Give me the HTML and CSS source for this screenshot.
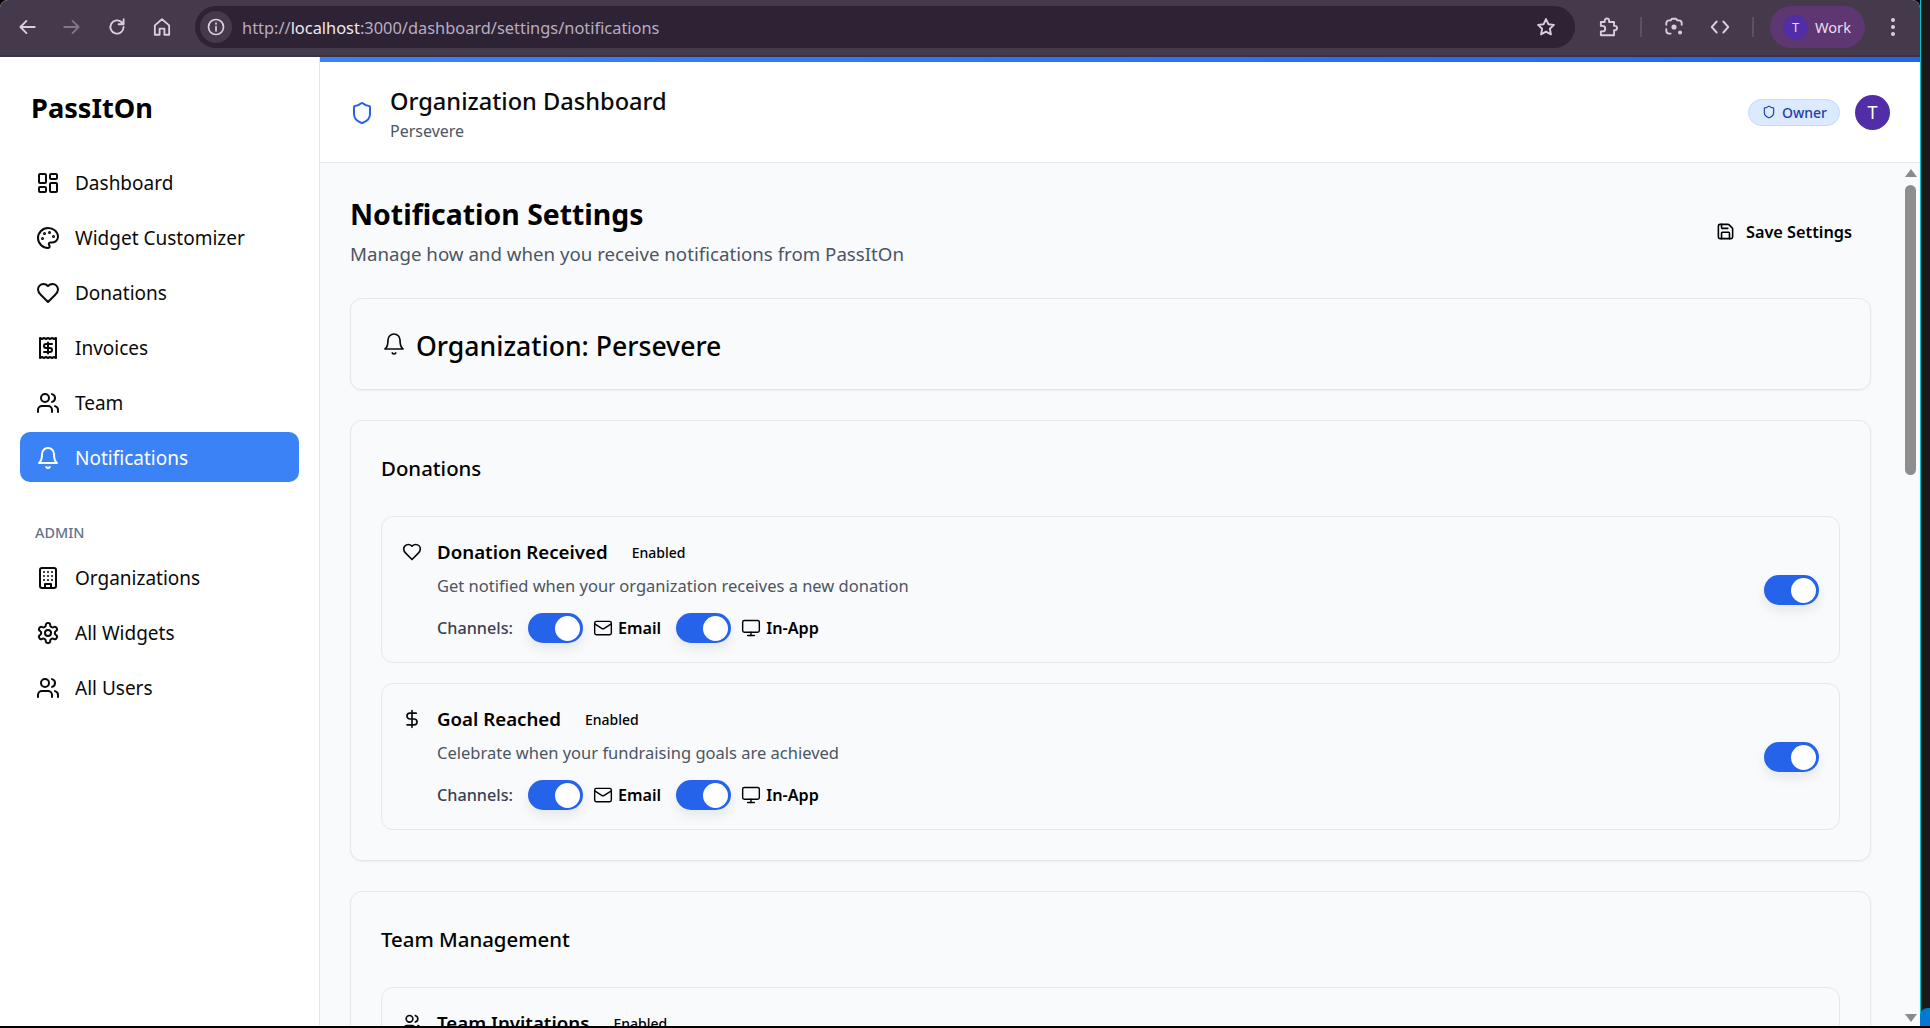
FILE: index.html
```html
<!DOCTYPE html>
<html lang="en">
<head>
  <meta charset="UTF-8">
  <title>PassItOn - Notification Settings</title>
  <link rel="stylesheet" href="styles.css">
</head>
<body>

  <!-- icon sprite -->
  <svg class="sprite" xmlns="http://www.w3.org/2000/svg">
    <symbol id="i-dashboard" viewBox="0 0 24 24"><rect x="3" y="3" width="7" height="9" rx="1"/><rect x="14" y="3" width="7" height="5" rx="1"/><rect x="14" y="12" width="7" height="9" rx="1"/><rect x="3" y="16" width="7" height="5" rx="1"/></symbol>
    <symbol id="i-palette" viewBox="0 0 24 24"><circle cx="13.5" cy="6.5" r=".5" fill="currentColor"/><circle cx="17.5" cy="10.5" r=".5" fill="currentColor"/><circle cx="8.5" cy="7.5" r=".5" fill="currentColor"/><circle cx="6.5" cy="12.5" r=".5" fill="currentColor"/><path d="M12 2C6.5 2 2 6.5 2 12s4.5 10 10 10c.926 0 1.648-.746 1.648-1.688 0-.437-.18-.835-.437-1.125-.29-.289-.438-.652-.438-1.125a1.64 1.64 0 0 1 1.668-1.668h1.996c3.051 0 5.555-2.503 5.555-5.554C21.965 6.012 17.461 2 12 2z"/></symbol>
    <symbol id="i-heart" viewBox="0 0 24 24"><path d="M19 14c1.49-1.46 3-3.21 3-5.5A5.5 5.5 0 0 0 16.5 3c-1.76 0-3 .5-4.5 2-1.5-1.5-2.74-2-4.5-2A5.5 5.5 0 0 0 2 8.5c0 2.3 1.5 4.05 3 5.5l7 7Z"/></symbol>
    <symbol id="i-receipt" viewBox="0 0 24 24"><path d="M4 2v20l2-1 2 1 2-1 2 1 2-1 2 1 2-1 2 1V2l-2 1-2-1-2 1-2-1-2 1-2-1-2 1Z"/><path d="M16 8h-6a2 2 0 1 0 0 4h4a2 2 0 1 1 0 4H8"/><path d="M12 17.5v-11"/></symbol>
    <symbol id="i-users" viewBox="0 0 24 24"><path d="M16 21v-2a4 4 0 0 0-4-4H6a4 4 0 0 0-4 4v2"/><circle cx="9" cy="7" r="4"/><path d="M22 21v-2a4 4 0 0 0-3-3.87"/><path d="M16 3.13a4 4 0 0 1 0 7.75"/></symbol>
    <symbol id="i-bell" viewBox="0 0 24 24"><path d="M6 8a6 6 0 0 1 12 0c0 7 3 9 3 9H3s3-2 3-9"/><path d="M10.3 21a1.94 1.94 0 0 0 3.4 0"/></symbol>
    <symbol id="i-building" viewBox="0 0 24 24"><rect x="4" y="2" width="16" height="20" rx="2"/><path d="M9 22v-4h6v4"/><path d="M8 6h.01M16 6h.01M12 6h.01M12 10h.01M12 14h.01M16 10h.01M16 14h.01M8 10h.01M8 14h.01"/></symbol>
    <symbol id="i-gear" viewBox="0 0 24 24"><path d="M12.22 2h-.44a2 2 0 0 0-2 2v.18a2 2 0 0 1-1 1.73l-.43.25a2 2 0 0 1-2 0l-.15-.08a2 2 0 0 0-2.73.73l-.22.38a2 2 0 0 0 .73 2.73l.15.1a2 2 0 0 1 1 1.72v.51a2 2 0 0 1-1 1.74l-.15.09a2 2 0 0 0-.73 2.73l.22.38a2 2 0 0 0 2.73.73l.15-.08a2 2 0 0 1 2 0l.43.25a2 2 0 0 1 1 1.73V20a2 2 0 0 0 2 2h.44a2 2 0 0 0 2-2v-.18a2 2 0 0 1 1-1.73l.43-.25a2 2 0 0 1 2 0l.15.08a2 2 0 0 0 2.73-.73l.22-.39a2 2 0 0 0-.73-2.73l-.15-.08a2 2 0 0 1-1-1.74v-.5a2 2 0 0 1 1-1.74l.15-.09a2 2 0 0 0 .73-2.73l-.22-.38a2 2 0 0 0-2.73-.73l-.15.08a2 2 0 0 1-2 0l-.43-.25a2 2 0 0 1-1-1.73V4a2 2 0 0 0-2-2z"/><circle cx="12" cy="12" r="3"/></symbol>
    <symbol id="i-shield" viewBox="0 0 24 24"><path d="M20 13c0 5-3.5 7.5-7.66 8.95a1 1 0 0 1-.67-.01C7.5 20.5 4 18 4 13V6a1 1 0 0 1 1-1c2 0 4.5-1.2 6.24-2.72a1.17 1.17 0 0 1 1.52 0C14.51 3.81 17 5 19 5a1 1 0 0 1 1 1z"/></symbol>
    <symbol id="i-save" viewBox="0 0 24 24"><path d="M15.2 3a2 2 0 0 1 1.4.6l3.8 3.8a2 2 0 0 1 .6 1.4V19a2 2 0 0 1-2 2H5a2 2 0 0 1-2-2V5a2 2 0 0 1 2-2z"/><path d="M17 21v-7a1 1 0 0 0-1-1H8a1 1 0 0 0-1 1v7"/><path d="M7 3v4a1 1 0 0 0 1 1h7"/></symbol>
    <symbol id="i-dollar" viewBox="0 0 24 24"><path d="M12 2v20"/><path d="M17 5H9.5a3.5 3.5 0 0 0 0 7h5a3.5 3.5 0 0 1 0 7H6"/></symbol>
    <symbol id="i-mail" viewBox="0 0 24 24"><rect x="2" y="4" width="20" height="16" rx="2"/><path d="m22 7-8.97 5.7a1.94 1.94 0 0 1-2.06 0L2 7"/></symbol>
    <symbol id="i-monitor" viewBox="0 0 24 24"><rect x="2" y="3" width="20" height="14" rx="2"/><path d="M8 21h8"/><path d="M12 17v4"/></symbol>
  </svg>

  <div class="window">

    <!-- browser toolbar -->
    <div class="toolbar">
      <div class="nav-btns">
        <svg class="tb-icon" viewBox="0 0 20 20"><path d="M17 10H4M9.5 4.5 4 10l5.5 5.5"/></svg>
        <svg class="tb-icon dim" viewBox="0 0 20 20"><path d="M3 10h13M10.500 4.500 16 10l-5.500 5.500"/></svg>
        <svg class="tb-icon" viewBox="0 0 20 20"><path d="M16 10a6 6 0 1 1-1.800-4.300L16 7.500M16 3v4.500h-4.500"/></svg>
        <svg class="tb-icon" viewBox="0 0 20 20"><path d="M3.500 17V8.500L10 3l6.500 5.500V17h-4.300v-5.500H7.800V17z"/></svg>
      </div>
      <div class="urlbar">
        <span class="url-info">
          <svg class="tb-icon" viewBox="0 0 20 20"><circle cx="10" cy="10" r="7.500"/><path d="M10 9.500v4.500M10 6.200v.8"/></svg>
        </span>
        <span class="url-text">http://<b>localhost</b>:3000/dashboard/settings/notifications</span>
        <svg class="tb-icon star" viewBox="0 0 20 20"><path d="m10 2.800 2.200 4.700 5 .6-3.700 3.500 1 5.100L10 14.200l-4.500 2.500 1-5.100-3.700-3.500 5-.6z"/></svg>
      </div>
      <div class="tb-right">
        <svg class="tb-icon" viewBox="0 0 20 20"><path d="M3.500 5.500H7V4.300a2 2 0 0 1 4 0v1.200h4.500V9h.7a2 2 0 0 1 0 4h-.7v4.500H3.500V14H5a2.500 2.500 0 0 0 0-5H3.500z"/></svg>
        <span class="tb-sep"></span>
        <svg class="tb-icon" viewBox="0 0 20 20"><path d="M7 4h-1.500a2.500 2.500 0 0 0-2.500 2.500V8M13 4h1.500A2.500 2.500 0 0 1 17 6.500V8M3 12v1.500A2.500 2.500 0 0 0 5.500 16H7M7 4l1-1.500h4L13 4"/><circle cx="10" cy="10" r="1.500" fill="currentColor"/><circle cx="15.500" cy="15" r="1" fill="currentColor"/></svg>
        <svg class="tb-icon" viewBox="0 0 20 20"><path d="M7 5 2.500 10 7 15M13 5l4.500 5-4.500 5"/></svg>
        <span class="tb-sep"></span>
        <div class="profile-pill"><span class="profile-dot">T</span>Work</div>
        <div class="dots"><i></i><i></i><i></i></div>
      </div>
    </div>

    <div class="app">
      <aside class="sidebar">
        <div class="logo">PassItOn</div>
        <nav class="nav">
          <a class="nav-item"><svg class="icon"><use href="#i-dashboard"/></svg>Dashboard</a>
          <a class="nav-item"><svg class="icon"><use href="#i-palette"/></svg>Widget Customizer</a>
          <a class="nav-item"><svg class="icon"><use href="#i-heart"/></svg>Donations</a>
          <a class="nav-item"><svg class="icon"><use href="#i-receipt"/></svg>Invoices</a>
          <a class="nav-item"><svg class="icon"><use href="#i-users"/></svg>Team</a>
          <a class="nav-item active"><svg class="icon"><use href="#i-bell"/></svg>Notifications</a>
        </nav>
        <div class="nav-label">ADMIN</div>
        <nav class="nav">
          <a class="nav-item"><svg class="icon"><use href="#i-building"/></svg>Organizations</a>
          <a class="nav-item"><svg class="icon"><use href="#i-gear"/></svg>All Widgets</a>
          <a class="nav-item"><svg class="icon"><use href="#i-users"/></svg>All Users</a>
        </nav>
      </aside>

      <div class="content">
        <div class="accent"></div>
        <header class="topbar">
          <svg class="icon shield"><use href="#i-shield"/></svg>
          <div class="topbar-title">
            <div class="org-title">Organization Dashboard</div>
            <div class="org-sub">Persevere</div>
          </div>
          <div class="badge"><svg class="icon"><use href="#i-shield"/></svg>Owner</div>
          <div class="avatar">T</div>
        </header>

        <div class="body">
          <main class="main">
            <div class="page-head">
              <div>
                <h1>Notification Settings</h1>
                <p class="page-sub">Manage how and when you receive notifications from PassItOn</p>
              </div>
              <button class="save-btn" type="button"><svg class="icon"><use href="#i-save"/></svg>Save Settings</button>
            </div>

            <section class="card org-card">
              <svg class="icon"><use href="#i-bell"/></svg>
              <h2>Organization: Persevere</h2>
            </section>

            <section class="card group">
              <h3>Donations</h3>
              <div class="rows">
                <div class="row">
                  <svg class="icon row-icon"><use href="#i-heart"/></svg>
                  <div class="row-body">
                    <div class="row-title"><h4>Donation Received</h4><span class="state">Enabled</span></div>
                    <p class="row-desc">Get notified when your organization receives a new donation</p>
                    <div class="channels">
                      <span class="channels-label">Channels:</span>
                      <span class="switch"></span>
                      <span class="channel"><svg class="icon"><use href="#i-mail"/></svg>Email</span>
                      <span class="switch"></span>
                      <span class="channel"><svg class="icon"><use href="#i-monitor"/></svg>In-App</span>
                    </div>
                  </div>
                  <span class="switch"></span>
                </div>
                <div class="row">
                  <svg class="icon row-icon"><use href="#i-dollar"/></svg>
                  <div class="row-body">
                    <div class="row-title"><h4>Goal Reached</h4><span class="state">Enabled</span></div>
                    <p class="row-desc">Celebrate when your fundraising goals are achieved</p>
                    <div class="channels">
                      <span class="channels-label">Channels:</span>
                      <span class="switch"></span>
                      <span class="channel"><svg class="icon"><use href="#i-mail"/></svg>Email</span>
                      <span class="switch"></span>
                      <span class="channel"><svg class="icon"><use href="#i-monitor"/></svg>In-App</span>
                    </div>
                  </div>
                  <span class="switch"></span>
                </div>
              </div>
            </section>

            <section class="card group">
              <h3>Team Management</h3>
              <div class="rows">
                <div class="row">
                  <svg class="icon row-icon"><use href="#i-users"/></svg>
                  <div class="row-body">
                    <div class="row-title"><h4>Team Invitations</h4><span class="state">Enabled</span></div>
                  </div>
                  <span class="switch"></span>
                </div>
              </div>
            </section>
          </main>

          <div class="scrollbar">
            <span class="arrow up"></span>
            <div class="track"><div class="thumb"></div></div>
            <span class="arrow down"></span>
          </div>
        </div>
      </div>
    </div>
  </div>

  <div class="edge"><div class="edge-corner"></div></div>

</body>
</html>
```

FILE: styles.css
```css
* {
  box-sizing: border-box;
}

html, body {
  height: 100%;
}

body {
  margin: 0;
  display: flex;
  overflow: hidden;
  background: #000;
  font-family: "Noto Sans", "Open Sans", Arial, sans-serif;
  color: #0a0a0a;
}

.sprite {
  display: none;
}

.icon {
  width: 24px;
  height: 24px;
  flex: none;
  fill: none;
  stroke: currentColor;
  stroke-width: 2;
  stroke-linecap: round;
  stroke-linejoin: round;
}

.window {
  width: 1920px;
  height: 1026px;
  display: flex;
  flex-direction: column;
  flex: none;
  background: #fff;
  overflow: hidden;
  border-top-left-radius: 8px;
  border-top-right-radius: 8px;
}

/* right edge of the desktop */
.edge {
  width: 10px;
  height: 1026px;
  flex: none;
  display: flex;
  align-items: flex-end;
  background: #191919;
  box-shadow: inset 1px 0 0 #00c4cc;
}

.edge-corner {
  width: 100%;
  height: 18px;
  background: #0078d4;
  border-top-left-radius: 8px;
}

/* browser toolbar */
.toolbar {
  height: 57px;
  flex: none;
  display: flex;
  align-items: center;
  background: #453a4c;
  border-bottom: 2px solid #3c3243;
  padding-bottom: 1px;
  color: #dbcde0;
}

.tb-icon {
  width: 22px;
  height: 22px;
  flex: none;
  fill: none;
  stroke: currentColor;
  stroke-width: 1.7;
  stroke-linecap: round;
  stroke-linejoin: round;
}

.nav-btns {
  width: 195px;
  display: flex;
  gap: 23px;
  padding-left: 16px;
  flex: none;
}

.dim {
  opacity: .4;
}

.urlbar {
  width: 1380px;
  height: 42px;
  flex: none;
  display: flex;
  align-items: center;
  background: #2e2235;
  border-radius: 21px;
  padding: 0 3px;
}

.url-info {
  width: 32px;
  height: 32px;
  margin-left: 2px;
  border-radius: 50%;
  background: #453a4c;
  display: flex;
  align-items: center;
  justify-content: center;
}

.url-info .tb-icon {
  width: 20px;
  height: 20px;
}

.url-text {
  margin-left: 10px;
  flex: 1;
  font-size: 16.4px;
  color: #b9adc0;
}

.url-text b {
  font-weight: 400;
  color: #efe8f2;
}

.star {
  margin-right: 15px;
}

.tb-right {
  flex: 1;
  display: flex;
  align-items: center;
  padding-left: 22px;
}

.tb-sep {
  width: 2px;
  height: 20px;
  margin: 0 21px;
  background: #5c5064;
}

.tb-right .tb-sep + .tb-icon + .tb-icon {
  margin-left: 24px;
}

.profile-pill {
  width: 95px;
  height: 42px;
  margin-left: -5px;
  display: flex;
  align-items: center;
  gap: 7px;
  padding-left: 13px;
  border-radius: 21px;
  background: #5e3672;
  font-size: 14.6px;
  color: #eadff0;
}

.profile-dot {
  width: 25px;
  height: 25px;
  border-radius: 50%;
  background: #512da8;
  display: flex;
  align-items: center;
  justify-content: center;
  font-size: 13px;
}

.dots {
  margin-left: 26px;
  display: flex;
  flex-direction: column;
  gap: 3px;
}

.dots i {
  width: 4px;
  height: 4px;
  border-radius: 50%;
  background: #dbcde0;
}

/* app */
.app {
  flex: 1;
  min-height: 0;
  display: flex;
}

.sidebar {
  width: 320px;
  flex: none;
  background: #fff;
  border-right: 1px solid #e5e7eb;
  padding: 0 20px;
}

.logo {
  height: 100px;
  padding: 32px 0 0 11px;
  font-size: 27.2px;
  line-height: 38px;
  font-weight: 700;
  color: #000;
}

.nav {
  display: flex;
  flex-direction: column;
  gap: 5px;
}

.nav-item {
  height: 50px;
  display: flex;
  align-items: center;
  gap: 15px;
  padding: 2px 0 0 16px;
  border-radius: 10px;
  font-size: 19px;
  color: #0a0a0a;
}

.nav-item.active {
  background: #3b82f6;
  color: #fff;
}

.nav-label {
  height: 70px;
  padding: 41px 0 0 15px;
  font-size: 14.4px;
  line-height: 20px;
  font-weight: 500;
  color: #64748b;
}

.content {
  flex: 1;
  min-width: 0;
  display: flex;
  flex-direction: column;
}

.accent {
  height: 5px;
  flex: none;
  background: linear-gradient(90deg, #3b82f6, #2563eb);
}

.topbar {
  height: 101px;
  flex: none;
  display: flex;
  align-items: center;
  padding: 2px 30px 0;
  background: #fff;
  border-bottom: 1px solid #e5e7eb;
}

.shield {
  color: #2563eb;
  margin-right: 16px;
}

.topbar-title {
  flex: 1;
}

.org-title {
  font-size: 23.6px;
  line-height: 35px;
  font-weight: 500;
}

.org-sub {
  font-size: 16px;
  line-height: 24px;
  color: #4b5563;
}

.badge {
  height: 27px;
  margin-top: -2px;
  padding: 0 12px 0 13px;
  display: flex;
  align-items: center;
  gap: 6px;
  border: 1px solid #bfdbfe;
  border-radius: 14px;
  background: #dbeafe;
  font-size: 14px;
  font-weight: 500;
  color: #1e40af;
}

.badge .icon {
  width: 14px;
  height: 14px;
}

.avatar {
  width: 35px;
  height: 35px;
  margin: -2px 0 0 15px;
  border-radius: 50%;
  background: #512da8;
  color: #fff;
  font-size: 18px;
  display: flex;
  align-items: center;
  justify-content: center;
}

.body {
  flex: 1;
  min-height: 0;
  display: flex;
  background: #f9fafb;
}

.main {
  flex: 1;
  min-width: 0;
  overflow: hidden;
  padding: 30px 30px 0;
}

.scrollbar {
  width: 19px;
  flex: none;
  display: flex;
  flex-direction: column;
  align-items: center;
  padding: 6px 0 4px;
}

.arrow {
  width: 0;
  height: 0;
  border-left: 6px solid transparent;
  border-right: 6px solid transparent;
  flex: none;
}

.arrow.up {
  border-bottom: 8px solid #8a8a8a;
}

.arrow.down {
  border-top: 8px solid #8a8a8a;
}

.track {
  flex: 1;
  width: 100%;
  padding: 8px 4px 0;
}

.thumb {
  height: 290px;
  border-radius: 6px;
  background: #8e8e8e;
}

.page-head {
  display: flex;
  justify-content: space-between;
  align-items: center;
  margin-bottom: 30px;
}

h1 {
  margin: 0;
  font-size: 28.4px;
  line-height: 42px;
  font-weight: 700;
  color: #000;
}

.page-sub {
  margin: 5px 0 0;
  font-size: 18.7px;
  line-height: 28px;
  color: #4b5563;
}

.save-btn {
  height: 46px;
  margin: 2px 0 0;
  padding: 0 19px 0 0;
  display: flex;
  align-items: center;
  gap: 11px;
  border: 0;
  background: none;
  font: inherit;
  font-size: 16.3px;
  font-weight: 600;
  color: #000;
}

.save-btn .icon {
  width: 19px;
  height: 19px;
}

.card {
  background: #f9fafb;
  border: 1px solid #e5e7eb;
  border-radius: 12px;
  box-shadow: 0 1px 2px rgba(0, 0, 0, .05);
}

.org-card {
  height: 92px;
  display: flex;
  align-items: center;
  gap: 10px;
  padding: 0 31px;
  margin-bottom: 30px;
}

.org-card .icon {
  stroke-width: 1.7;
}

h2 {
  margin: 0;
  padding-top: 4px;
  font-size: 26.6px;
  line-height: 38px;
  font-weight: 500;
  color: #000;
}

.group {
  padding: 30px;
  margin-bottom: 30px;
}

h3 {
  margin: 0 0 30px;
  font-size: 20.4px;
  line-height: 35px;
  font-weight: 500;
  color: #000;
}

.rows {
  display: flex;
  flex-direction: column;
  gap: 20px;
}

.row {
  height: 147px;
  display: flex;
  align-items: flex-start;
  padding: 21px 20px 20px;
  border: 1px solid #e5e7eb;
  border-radius: 12px;
}

.row > .switch {
  align-self: center;
}

.row-icon {
  width: 20px;
  height: 20px;
  margin: 4px 15px 0 0;
}

.row-body {
  flex: 1;
}

.row-title {
  display: flex;
  align-items: center;
  gap: 24px;
}

h4 {
  margin: 0;
  font-size: 18.7px;
  line-height: 28px;
  font-weight: 600;
  color: #000;
}

.state {
  font-size: 14px;
  font-weight: 500;
  color: #000;
}

.row-desc {
  margin: 8px 0 15px;
  font-size: 16.5px;
  line-height: 24px;
  color: #4b5563;
}

.channels {
  display: flex;
  align-items: center;
  height: 30px;
}

.channels-label {
  font-size: 16.2px;
  font-weight: 500;
  color: #374151;
  margin-right: 15px;
}

.channel {
  display: flex;
  align-items: center;
  gap: 5px;
  margin: 0 15px 0 10px;
  font-size: 16.2px;
  font-weight: 600;
  color: #000;
}

.channel .icon {
  width: 20px;
  height: 20px;
  stroke-width: 1.7;
}

.switch {
  width: 55px;
  height: 30px;
  flex: none;
  display: flex;
  justify-content: flex-end;
  align-items: center;
  padding-right: 3px;
  border-radius: 15px;
  background: #2563eb;
  box-shadow: 0 6px 12px rgba(0, 0, 0, .08);
}

.switch::after {
  content: "";
  width: 25px;
  height: 25px;
  border-radius: 50%;
  background: #fff;
}
```
